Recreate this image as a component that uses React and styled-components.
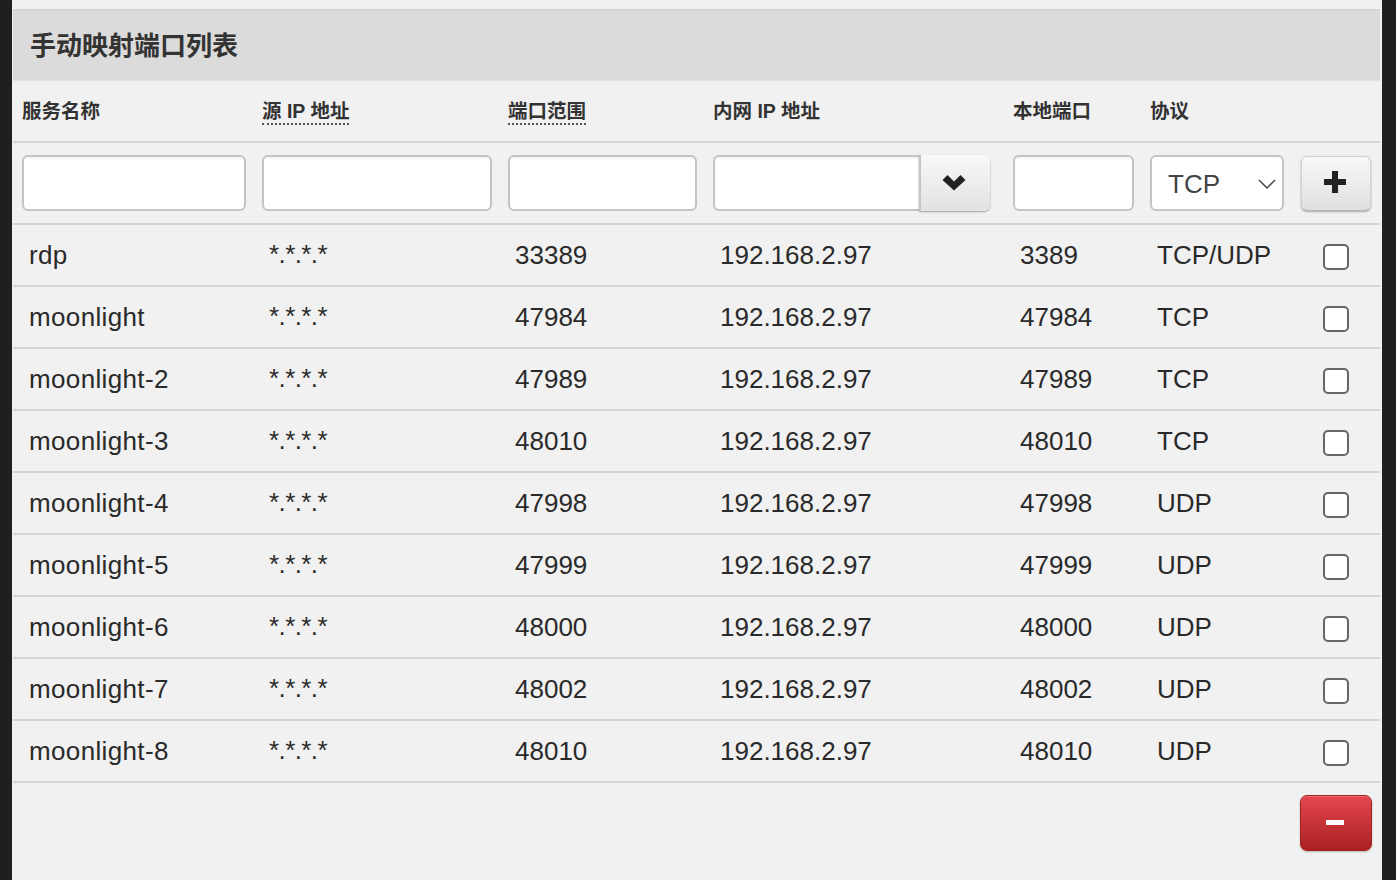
import React from 'react';
import styled, { createGlobalStyle } from 'styled-components';

const FONT = '"Liberation Sans", Arial, "Noto Sans CJK SC", sans-serif';

const GlobalStyle = createGlobalStyle`
  html, body {
    margin: 0;
    height: 100%;
    overflow: hidden;
    background: #1f1f1f;
    font-family: ${FONT};
  }
`;

const Panel = styled.div`
  width: 1370px;
  height: 880px;
  margin-left: 12px;
  padding: 9px 2px 0 1px;
  box-sizing: border-box;
  background: #f1f1f1;
`;

const SectionTitle = styled.h3`
  margin: 0;
  height: 72px;
  box-sizing: border-box;
  padding: 0 0 4px 17px;
  display: flex;
  align-items: center;
  background: #dbdbdb;
  border-top: 1px solid #d0d0d0;
  border-bottom: 1px solid #e2e2e2;
  font-size: 26px;
  font-weight: 700;
  color: #333;
`;

const Table = styled.table`
  width: 1367px;
  border-collapse: separate;
  border-spacing: 0;
  table-layout: fixed;
`;

const Th = styled.th`
  height: 62px;
  padding: 0 8px 4px;
  box-sizing: border-box;
  text-align: left;
  vertical-align: middle;
  font-size: 19.5px;
  font-weight: 700;
  color: #333;
  border-bottom: 2px solid #d4d4d4;

  &:first-child {
    padding-left: 9px;
  }
`;

const Hint = styled.span`
  border-bottom: 2px dotted #555;
  padding-bottom: 1px;
`;

const FilterCell = styled.td`
  height: 82px;
  padding: 0 8px;
  box-sizing: border-box;
  border-bottom: 2px solid #d4d4d4;

  &:first-child {
    padding-left: 9px;
  }
`;

const Field = styled.input`
  display: block;
  width: ${({ $w }) => $w}px;
  height: 56px;
  box-sizing: border-box;
  border: 2px solid #c4c4c4;
  border-radius: ${({ $joined }) => ($joined ? '6px 0 0 6px' : '6px')};
  ${({ $joined }) => $joined && 'border-right: 0;'}
  background: #fff;
  box-shadow: inset 0 2px 2px rgba(0, 0, 0, 0.04);
  outline: none;
`;

const Combo = styled.div`
  display: flex;
  width: 277px;
`;

const ComboButton = styled.button`
  width: 71px;
  height: 56px;
  padding: 0 3px 2px 0;
  flex: none;
  display: flex;
  align-items: center;
  justify-content: center;
  border: 0;
  border-left: 2px solid #c4c4c4;
  border-radius: 0 6px 6px 0;
  background: linear-gradient(#f8f8f8, #e2e2e2);
  box-shadow: 0 1px 2px rgba(0, 0, 0, 0.35);
`;

const SelectBox = styled.div`
  width: 134px;
  height: 56px;
  box-sizing: border-box;
  padding: 2px 6px 0 16px;
  display: flex;
  align-items: center;
  justify-content: space-between;
  border: 2px solid #c4c4c4;
  border-radius: 6px;
  background: #fff;
  font-size: 26px;
  color: #444;
`;

const AddButton = styled.button`
  width: 70px;
  height: 55px;
  margin-left: 1px;
  padding: 0 3px 2px 0;
  display: flex;
  align-items: center;
  justify-content: center;
  border: 1px solid #d0d0d0;
  border-bottom-color: #b5b5b5;
  border-radius: 6px;
  background: linear-gradient(#f8f8f8, #e0e0e0);
  box-shadow: 0 1px 2px rgba(0, 0, 0, 0.3);
`;

const Td = styled.td`
  height: 62px;
  padding: 0 15px;
  box-sizing: border-box;
  font-size: 26px;
  color: #2a2a2a;
  border-bottom: 2px solid #d4d4d4;
  white-space: nowrap;

  &:first-child {
    padding-left: 16px;
  }
`;

const NameCell = styled(Td)`
  letter-spacing: 0.35px;
`;

const MaskCell = styled(Td)`
  padding-bottom: 2px;
  letter-spacing: -0.6px;
`;

const CheckCell = styled(Td)`
  padding: 4px 0 0 31px;
`;

const Check = styled.input`
  appearance: none;
  display: block;
  width: 26px;
  height: 26px;
  margin: 0;
  border: 2px solid #666;
  border-radius: 5px;
  background: #fff;
`;

const Footer = styled.div`
  display: flex;
  justify-content: flex-end;
  padding: 12px 8px 0 0;
`;

const RemoveButton = styled.button`
  width: 72px;
  height: 56px;
  padding: 0;
  display: flex;
  align-items: center;
  justify-content: center;
  border: 1px solid #a32222;
  border-radius: 7px;
  background: linear-gradient(#e5474d, #a92020);
  box-shadow: inset 0 1px 0 rgba(255, 255, 255, 0.2), 0 1px 2px rgba(0, 0, 0, 0.25);
`;

const MinusBar = styled.span`
  display: block;
  width: 18px;
  height: 5px;
  margin: 0 3px 2px 0;
  background: #fff;
`;

const widths = [241, 246, 205, 300, 137, 150, 88];

const rows = [
  ['rdp', '33389', '3389', 'TCP/UDP'],
  ['moonlight', '47984', '47984', 'TCP'],
  ['moonlight-2', '47989', '47989', 'TCP'],
  ['moonlight-3', '48010', '48010', 'TCP'],
  ['moonlight-4', '47998', '47998', 'UDP'],
  ['moonlight-5', '47999', '47999', 'UDP'],
  ['moonlight-6', '48000', '48000', 'UDP'],
  ['moonlight-7', '48002', '48002', 'UDP'],
  ['moonlight-8', '48010', '48010', 'UDP'],
];

const App = () => (
  <>
    <GlobalStyle />
    <Panel>
      <SectionTitle>手动映射端口列表</SectionTitle>
      <Table>
        <colgroup>
          {widths.map((w, i) => (
            <col key={i} style={{ width: w }} />
          ))}
        </colgroup>
        <thead>
          <tr>
            <Th>服务名称</Th>
            <Th><Hint>源 IP 地址</Hint></Th>
            <Th><Hint>端口范围</Hint></Th>
            <Th>内网 IP 地址</Th>
            <Th>本地端口</Th>
            <Th>协议</Th>
            <Th />
          </tr>
          <tr>
            <FilterCell><Field $w={224} /></FilterCell>
            <FilterCell><Field $w={230} /></FilterCell>
            <FilterCell><Field $w={189} /></FilterCell>
            <FilterCell>
              <Combo>
                <Field $w={206} $joined />
                <ComboButton aria-label="展开">
                  <svg width="24" height="17" viewBox="0 0 24 17">
                    <path d="M0.5 6 L5.5 1 L12 7.5 L18.5 1 L23.5 6 L12 16.5 Z" fill="#222" />
                  </svg>
                </ComboButton>
              </Combo>
            </FilterCell>
            <FilterCell><Field $w={121} /></FilterCell>
            <FilterCell>
              <SelectBox>
                TCP
                <svg width="18" height="12" viewBox="0 0 18 12">
                  <path d="M1 2 L9 10 L17 2" fill="none" stroke="#444" strokeWidth="1.5" />
                </svg>
              </SelectBox>
            </FilterCell>
            <FilterCell>
              <AddButton aria-label="添加">
                <svg width="24" height="24" viewBox="0 0 24 24">
                  <path d="M9 1 H15 V9 H23 V15 H15 V23 H9 V15 H1 V9 H9 Z" fill="#222" />
                </svg>
              </AddButton>
            </FilterCell>
          </tr>
        </thead>
        <tbody>
          {rows.map(([name, port, local, proto]) => (
            <tr key={name}>
              <NameCell>{name}</NameCell>
              <MaskCell>*.*.*.*</MaskCell>
              <Td>{port}</Td>
              <Td>192.168.2.97</Td>
              <Td>{local}</Td>
              <Td>{proto}</Td>
              <CheckCell><Check type="checkbox" /></CheckCell>
            </tr>
          ))}
        </tbody>
      </Table>
      <Footer>
        <RemoveButton aria-label="删除"><MinusBar /></RemoveButton>
      </Footer>
    </Panel>
  </>
);

export default App;
